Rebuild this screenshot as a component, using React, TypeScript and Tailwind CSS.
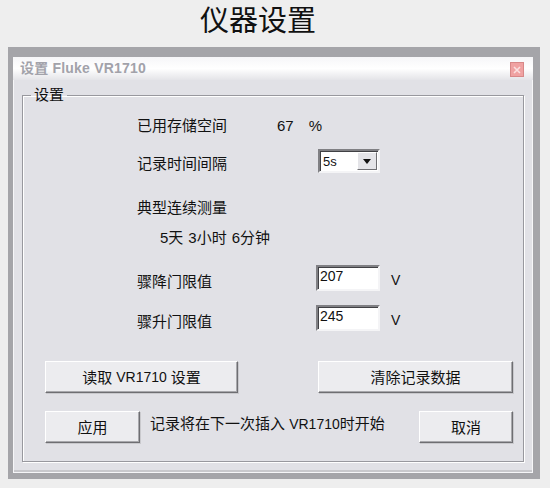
import React from "react";

const FONT = { fontFamily: '"Liberation Sans", "Noto Sans CJK SC", sans-serif' };

const Btn: React.FC<{ className?: string; children: React.ReactNode }> = ({ className = "", children }) => (
  <button
    className={`flex items-center justify-center bg-[#ececef] border border-t-white border-l-white border-r-[#6e6e72] border-b-[#6e6e72] shadow-[inset_-1px_-1px_0_#a8a8ac,1px_1px_0_#c9c9cd] text-[15px] text-[#111] leading-none ${className}`}
  >
    {children}
  </button>
);

const Field: React.FC<{ value: string }> = ({ value }) => (
  <div className="w-[64px] h-[26px] bg-white border-2 border-t-[#808084] border-l-[#808084] border-r-[#f4f4f6] border-b-[#f4f4f6] shadow-[inset_1px_1px_0_#404044] pl-[2px] text-[14px] leading-[18px] text-[#111]">
    {value}
  </div>
);

export default function App() {
  return (
    <div className="w-[550px] h-[488px] bg-[#eeeeee] overflow-hidden" style={FONT}>
      <div className="h-[47px] flex items-center justify-center pr-[34px] pb-[4px] text-[29px] leading-none text-[#111]">
        仪器设置
      </div>

      <div className="ml-[8px] w-[532px] h-[432px] bg-[#a5a5a9] pt-[10px] pl-[5px] pr-[7px] pb-[6px]">
        <div className="flex flex-col h-full bg-[#e1e1e6]">
          {/* title bar */}
          <div className="h-[23px] flex items-center justify-between pl-[7px] pr-[9px] bg-gradient-to-b from-[#f6f6f8] via-white to-[#e4e4e8]">
            <span className="text-[14px] font-bold text-[#a2a2aa] tracking-[0.2px]">设置 Fluke VR1710</span>
            <span className="w-[14px] h-[15px] bg-[#f0a2a2] border border-[#d88888] flex items-center justify-center mt-[2px]">
              <svg width="8" height="8" viewBox="0 0 8 8">
                <path d="M1 1L7 7M7 1L1 7" stroke="#fbe0e0" strokeWidth="1.6" />
              </svg>
            </span>
          </div>

          {/* body */}
          <div className="flex-1 px-[8px] pt-[6px] pb-[10px] border-x border-b border-[#f6f6f8] shadow-[inset_0_-2px_0_#c8c8cc]">
            <fieldset className="h-[376px] border border-[#98989e] shadow-[inset_1px_1px_0_#fff,1px_1px_0_#fff]">
              <legend className="ml-[8px] px-[3px] text-[15px] leading-[18px] text-[#111]">设置</legend>

              <div className="pl-[114px] text-[15px] text-[#111]">
                <div className="mt-[9px] h-[26px] flex items-center">
                  <span className="w-[140px]">已用存储空间</span>
                  <span>67</span>
                  <span className="ml-[15px]">%</span>
                </div>

                <div className="mt-[10px] h-[24px] flex items-center">
                  <span className="w-[181px] pt-[7px]">记录时间间隔</span>
                  <div className="w-[62px] h-[24px] bg-white border-2 border-t-[#808084] border-l-[#808084] border-r-[#f4f4f6] border-b-[#f4f4f6] shadow-[inset_1px_1px_0_#404044] flex items-center justify-between">
                    <span className="pl-[3px] text-[13px] leading-none">5s</span>
                    <span className="w-[20px] h-[18px] mr-[1px] bg-[#e4e4e8] border border-t-white border-l-white border-r-[#6e6e72] border-b-[#6e6e72] flex items-center justify-center">
                      <svg width="8" height="5" viewBox="0 0 8 5">
                        <path d="M0 0H8L4 5Z" fill="#111" />
                      </svg>
                    </span>
                  </div>
                </div>

                <div className="mt-[23px] h-[24px] flex items-center">典型连续测量</div>
                <div className="mt-[6px] h-[24px] flex items-center pl-[23px] gap-[5px]">
                  <span>5天</span>
                  <span>3小时</span>
                  <span>6分钟</span>
                </div>

                <div className="mt-[15px] h-[26px] flex items-center">
                  <span className="w-[179px] pt-[9px]">骤降门限值</span>
                  <Field value="207" />
                  <span className="ml-[11px] pt-[5px] text-[14px]">V</span>
                </div>

                <div className="mt-[14px] h-[26px] flex items-center">
                  <span className="w-[179px] pt-[9px]">骤升门限值</span>
                  <Field value="245" />
                  <span className="ml-[11px] pt-[5px] text-[14px]">V</span>
                </div>
              </div>

              <div className="ml-[22px] mr-[10px] mt-[30px] flex justify-between">
                <Btn className="w-[193px] h-[32px] gap-[4px]">
                  读取 <span className="text-[14px]">VR1710</span>设置
                </Btn>
                <Btn className="w-[195px] h-[32px]">清除记录数据</Btn>
              </div>

              <div className="ml-[22px] mr-[10px] mt-[18px] flex items-center">
                <Btn className="w-[95px] h-[32px]">应用</Btn>
                <span className="ml-[10px] pb-[6px] text-[15px] text-[#111]">
                  记录将在下一次插入 <span className="text-[14px]">VR1710</span>时开始
                </span>
                <Btn className="ml-auto w-[94px] h-[32px]">取消</Btn>
              </div>
            </fieldset>
          </div>
        </div>
      </div>
    </div>
  );
}
